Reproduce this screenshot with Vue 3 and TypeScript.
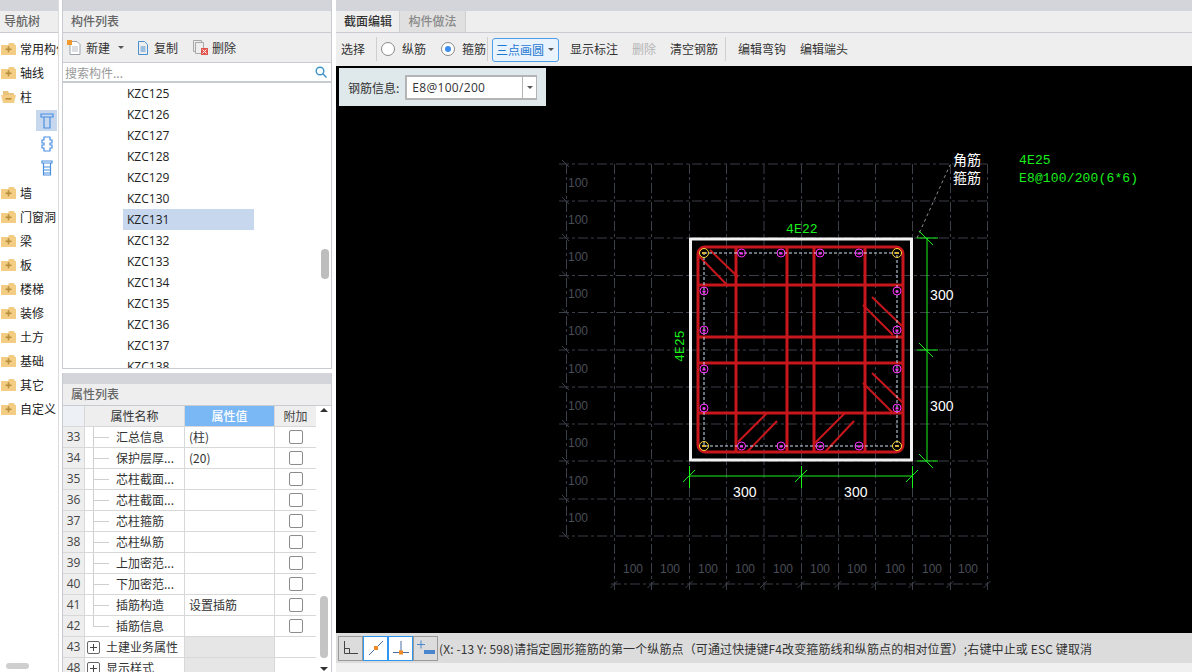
<script setup lang="ts">
interface TreeItem {
  label: string;
  open?: boolean;
}
interface PropRow {
  no: number;
  name: string;
  value?: string;
  group?: boolean;
  last?: boolean;
}

const topTree: TreeItem[] = [
  { label: '常用构件类型' },
  { label: '轴线' },
  { label: '柱', open: true },
];
const bottomTree: TreeItem[] = ['墙', '门窗洞', '梁', '板', '楼梯', '装修', '土方', '基础', '其它', '自定义'].map((label) => ({ label }));

const parts = [125, 126, 127, 128, 129, 130, 131, 132, 133, 134, 135, 136, 137, 138].map((n) => 'KZC' + n);

const props: PropRow[] = [
  { no: 33, name: '汇总信息', value: '(柱)' },
  { no: 34, name: '保护层厚...', value: '(20)' },
  { no: 35, name: '芯柱截面...' },
  { no: 36, name: '芯柱截面...' },
  { no: 37, name: '芯柱箍筋' },
  { no: 38, name: '芯柱纵筋' },
  { no: 39, name: '上加密范...' },
  { no: 40, name: '下加密范...' },
  { no: 41, name: '插筋构造', value: '设置插筋' },
  { no: 42, name: '插筋信息', last: true },
  { no: 43, name: '土建业务属性', group: true },
  { no: 48, name: '显示样式', group: true },
];

// drawing coordinates are page pixels, the svg viewBox starts at the canvas corner
const gridX = [614.5, 651.5, 689.5, 726.5, 764, 801.5, 838.5, 875.5, 912.5, 950.5, 987.5];
const gridY = [164, 201, 238, 275.5, 312.5, 350, 387, 424, 461, 499, 536];
const leftLabels = [183, 220, 257, 294, 331, 369, 406, 443, 481, 518];
const bottomLabels = [633, 670, 708, 745, 783, 820, 857, 895, 932, 968];

const rebarV = [736, 787, 814, 865];
const rebarH = [285, 337, 363, 413];
const hooks = [
  [698, 255, 728, 286],
  [710, 250, 738, 277],
  [863, 305, 893, 335],
  [872, 297, 902, 326],
  [863, 383, 893, 413],
  [872, 373, 902, 402],
  [738, 442, 767, 413],
  [747, 452, 777, 421],
  [815, 443, 845, 413],
  [825, 452, 854, 421],
];
const barsTop = [741.5, 781, 820, 859];
const barsSide = [291, 330, 369, 408];
const corners = [
  [704, 253],
  [897, 253],
  [704, 446],
  [897, 446],
];
const sideBars = [
  ...barsTop.flatMap((x) => [[x, 253], [x, 446]]),
  ...barsSide.flatMap((y) => [[704, y], [897, y]]),
];
</script>

<template>
  <div class="app">
    <aside class="nav">
      <div class="strip"></div>
      <div class="head">导航树</div>
      <div class="tree">
        <div v-for="item in topTree" :key="item.label" class="tree-row">
          <svg v-if="item.open" class="folder" width="15" height="13" viewBox="0 0 15 13">
            <path d="M2 3V1h5l1 2h5v2H2z" fill="#e8c47c" />
            <path d="M0 5h15l-2 8H2z" fill="#f2cd83" />
            <rect x="4.500" y="8" width="6" height="1.600" fill="#b98f3c" />
          </svg>
          <svg v-else class="folder" width="15" height="13" viewBox="0 0 15 13">
            <path d="M0 3h7l1-2h5l1 2h1v10H0z" fill="#f2cd83" />
            <rect x="4.500" y="6.500" width="6" height="1.600" fill="#b98f3c" />
            <rect x="6.700" y="4.300" width="1.600" height="6" fill="#b98f3c" />
          </svg>
          <span>{{ item.label }}</span>
        </div>
        <div class="tree-child selected">
          <svg width="14" height="16" viewBox="0 0 14 16" fill="none" stroke="#4a90e2" stroke-width="1.2">
            <path d="M1 1h12v3H1zM4 4h6v11H4z" />
          </svg>
        </div>
        <div class="tree-child">
          <svg width="14" height="16" viewBox="0 0 14 16" fill="none" stroke="#4a90e2" stroke-width="1.2">
            <path d="M4 1h6v3h2v3h-2v2h2v3h-2v3H4v-3H2V9h2V7H2V4h2z" />
          </svg>
        </div>
        <div class="tree-child">
          <svg width="14" height="16" viewBox="0 0 14 16" fill="none" stroke="#4a90e2" stroke-width="1.2">
            <path d="M2 1h10v2H2zM3.500 3h7v12h-7zM3.500 7h7M3.500 10h7M3.500 13h7" />
          </svg>
        </div>
        <div v-for="item in bottomTree" :key="item.label" class="tree-row">
          <svg class="folder" width="15" height="13" viewBox="0 0 15 13">
            <path d="M0 3h7l1-2h5l1 2h1v10H0z" fill="#f2cd83" />
            <rect x="4.500" y="6.500" width="6" height="1.600" fill="#b98f3c" />
            <rect x="6.700" y="4.300" width="1.600" height="6" fill="#b98f3c" />
          </svg>
          <span>{{ item.label }}</span>
        </div>
      </div>
      <div class="nav-thumb"></div>
    </aside>

    <section class="middle">
      <div class="part-panel">
        <div class="strip"></div>
        <div class="head">构件列表</div>
        <div class="part-tools">
          <span class="tool first">
            <svg width="15" height="15" viewBox="0 0 15 15" fill="none">
              <path d="M3 1.500h7l3 3v10H3z" fill="#fff" stroke="#9aa3ad" />
              <path d="M5 7h6M5 9h6M5 11h6" stroke="#b6bcc4" />
              <rect x="0" y="0" width="5" height="5" fill="#f29a2e" />
            </svg>
            <span>新建</span>
            <i class="caret"></i>
          </span>
          <span class="tool copy">
            <svg width="12" height="14" viewBox="0 0 12 14" fill="none" stroke="#4a90d0">
              <path d="M1.500.500h6l3 3v10h-9zM3.500 6h5M3.500 8h5M3.500 10h5" />
            </svg>
            <span>复制</span>
          </span>
          <span class="tool del">
            <svg width="15" height="15" viewBox="0 0 15 15" fill="none">
              <path d="M.500.500h8v11h-8z" stroke="#a8a8a8" />
              <path d="M2.500 2.500h8v11h-8z" stroke="#a8a8a8" fill="#eee" />
              <rect x="8" y="8" width="7" height="7" fill="#e0564f" />
              <path d="M9.500 9.500l4 4M13.500 9.500l-4 4" stroke="#fff" />
            </svg>
            <span>删除</span>
          </span>
        </div>
        <div class="search">
          <span>搜索构件...</span>
          <svg width="12" height="12" viewBox="0 0 12 12" fill="none" stroke="#3c92c8" stroke-width="1.400">
            <circle cx="5" cy="5" r="3.800" />
            <path d="M8 8l3.500 3.500" />
          </svg>
        </div>
        <div class="part-list">
          <div v-for="p in parts" :key="p" class="part" :class="{ active: p === 'KZC131' }">{{ p }}</div>
          <div class="list-thumb"></div>
        </div>
      </div>

      <div class="prop-panel">
        <div class="strip"></div>
        <div class="head">属性列表</div>
        <div class="prop-body">
          <div class="prop-table">
            <div class="prop-row header">
              <div class="c-no"></div>
              <div class="c-name">属性名称</div>
              <div class="c-value">属性值</div>
              <div class="c-extra">附加</div>
            </div>
            <div v-for="r in props" :key="r.no" class="prop-row">
              <div class="c-no">{{ r.no }}</div>
              <div class="c-name" :class="{ branch: !r.group, last: r.last, group: r.group }">
                <i v-if="r.group" class="plus"></i>
                <span>{{ r.name }}</span>
              </div>
              <div class="c-value" :class="{ muted: r.group }">{{ r.value }}</div>
              <div class="c-extra"><i v-if="!r.group" class="check"></i></div>
            </div>
          </div>
          <div class="prop-scroll">
            <i class="arrow up"></i>
            <i class="arrow down"></i>
            <div class="prop-thumb"></div>
          </div>
        </div>
      </div>
    </section>

    <main class="editor">
      <div class="strip"></div>
      <div class="tabs">
        <div class="tab active">截面编辑</div>
        <div class="tab">构件做法</div>
      </div>
      <div class="tools">
        <span class="t-select">选择</span>
        <i class="sep"></i>
        <span class="radio"></span>
        <span class="r-label">纵筋</span>
        <span class="radio on"></span>
        <span class="r-label end">箍筋</span>
        <i class="sep tight"></i>
        <span class="combo">三点画圆<i class="caret"></i></span>
        <span class="btn">显示标注</span>
        <span class="btn disabled">删除</span>
        <span class="btn">清空钢筋</span>
        <i class="sep wide"></i>
        <span class="btn first">编辑弯钩</span>
        <span class="btn">编辑端头</span>
      </div>

      <div class="canvas">
        <div class="info">
          <span>钢筋信息:</span>
          <div class="info-select">
            <span class="info-text">E8@100/200</span>
            <span class="info-arrow"><i class="caret"></i></span>
          </div>
        </div>
        <svg class="drawing" viewBox="336 66 856 567" width="856" height="567">
          <g stroke="#3a3f4a" stroke-width="1" stroke-dasharray="10 3 3 3" fill="none">
            <path v-for="y in gridY" :key="'h' + y" :d="`M559 ${y}H989`" />
            <path v-for="x in gridX" :key="'v' + x" :d="`M${x} 164V590`" />
            <path d="M566.500 164V536M611 584H990" />
          </g>
          <g stroke="#3a3f4a" fill="none">
            <path v-for="y in gridY" :key="'t' + y" :d="`M562 ${y - 4}l7 7`" />
            <path v-for="x in gridX" :key="'b' + x" :d="`M${x - 4} 588l7 -7`" />
          </g>
          <g class="dim-text">
            <text v-for="y in leftLabels" :key="'l' + y" x="568" :y="y + 4">100</text>
            <text v-for="x in bottomLabels" :key="'m' + x" :x="x" y="573" text-anchor="middle">100</text>
          </g>

          <path d="M917 238L950 165" stroke="#8a8a8a" stroke-dasharray="3 3" fill="none" />
          <rect x="690.500" y="239" width="221" height="221" fill="none" stroke="#f2f2f2" stroke-width="3" />

          <g stroke="#c8161d" stroke-width="3" fill="none">
            <rect x="698" y="247" width="205" height="205" rx="7" />
            <path v-for="x in rebarV" :key="'rv' + x" :d="`M${x} 247V452`" />
            <path v-for="y in rebarH" :key="'rh' + y" :d="`M698 ${y}H903`" />
          </g>
          <g stroke="#c8161d" stroke-width="2" fill="none">
            <path v-for="h in hooks" :key="h.join()" :d="`M${h[0]} ${h[1]}L${h[2]} ${h[3]}`" />
          </g>
          <rect x="704" y="253" width="193" height="193" fill="none" stroke="#cfe2f5" stroke-dasharray="3 2" />

          <g fill="none" stroke="#ff30ff">
            <circle v-for="b in sideBars" :key="b.join()" :cx="b[0]" :cy="b[1]" r="4" />
          </g>
          <g fill="#ff30ff">
            <rect v-for="b in sideBars" :key="'f' + b.join()" :x="b[0] - 1.500" :y="b[1] - 0.500" width="3" height="2" />
          </g>
          <g fill="none" stroke="#ffdc3c">
            <circle v-for="c in corners" :key="c.join()" :cx="c[0]" :cy="c[1]" r="4.500" />
          </g>
          <g fill="#d9b23c">
            <rect v-for="c in corners" :key="'y' + c.join()" :x="c[0] - 2" :y="c[1] - 1" width="4" height="2" />
          </g>

          <g stroke="#19f01c" fill="none">
            <path d="M689.500 476H912.500M689.500 466V488M801.500 466V488M912.500 466V488" />
            <path d="M683 482l12 -12M795 482l12 -12M906 482l12 -12" />
            <path d="M927 238V461M917 238H938M917 350H938M917 461H938" />
            <path d="M919 231l14 14M919 343l14 14M919 454l14 14" />
          </g>

          <g class="cad green">
            <text x="786" y="233">4E22</text>
            <text x="1019" y="164">4E25</text>
            <text x="1019" y="182">E8@100/200(6*6)</text>
            <text transform="translate(684 362) rotate(-90)">4E25</text>
          </g>
          <g class="cad white">
            <text x="733" y="497">300</text>
            <text x="844" y="497">300</text>
            <text x="930" y="300">300</text>
            <text x="930" y="411">300</text>
          </g>
          <g class="cad-cn">
            <text x="953" y="165">角筋</text>
            <text x="953" y="183">箍筋</text>
          </g>
        </svg>
      </div>

      <div class="status">
        <span class="s-btn">
          <svg width="16" height="16" viewBox="0 0 16 16" fill="none" stroke="#444">
            <path d="M1.500 1v12.500H15M1.500 8.500h5v5" />
          </svg>
        </span>
        <span class="s-btn on">
          <svg width="18" height="18" viewBox="0 0 18 18" fill="none">
            <path d="M2 16L16 2" stroke="#4a6fa5" />
            <rect x="7" y="7" width="4" height="4" fill="#f08a24" />
          </svg>
        </span>
        <span class="s-btn on">
          <svg width="18" height="18" viewBox="0 0 18 18" fill="none">
            <path d="M1 13.500h16M9 2v13" stroke="#4a6fa5" />
            <rect x="7" y="11.500" width="4" height="4" fill="#f08a24" />
          </svg>
        </span>
        <span class="s-btn">
          <svg width="20" height="18" viewBox="0 0 20 18" fill="none">
            <path d="M1 5.500h8M5 1.500v8" stroke="#4a86d0" />
            <rect x="8" y="11" width="11" height="4" fill="#4a86d0" />
          </svg>
        </span>
        <span class="s-text">(X: -13 Y: 598)请指定圆形箍筋的第一个纵筋点（可通过快捷键F4改变箍筋线和纵筋点的相对位置）;右键中止或 ESC 键取消</span>
      </div>
      <div class="foot"></div>
    </main>
  </div>
</template>

<style>
html,
body {
  margin: 0;
  background: #fff;
  overflow: hidden;
}
</style>

<style scoped>
.app {
  display: flex;
  width: 1192px;
  height: 672px;
  overflow: hidden;
  background: #fff;
  color: #333;
  font-family: "Noto Sans CJK SC", "Noto Sans", sans-serif;
  font-size: 12px;
}
.strip {
  height: 11px;
  background: #d4d5da;
  flex: none;
}
.head {
  height: 21px;
  line-height: 20px;
  padding-left: 8px;
  background: #eeeeee;
  border-bottom: 1px solid #c8ccd0;
  color: #666;
  font-weight: 500;
  flex: none;
}
.nav {
  position: relative;
  width: 58px;
  margin-right: 3px;
  border-right: 1px solid #dcdcdc;
  overflow: hidden;
  flex: none;
}
.nav .head {
  padding-left: 4px;
}
.tree {
  padding-top: 3px;
}
.tree-row {
  display: flex;
  align-items: center;
  height: 24px;
  white-space: nowrap;
  color: #222;
}
.folder {
  margin: 0 4px 0 1px;
  flex: none;
}
.tree-child {
  display: flex;
  align-items: center;
  justify-content: center;
  width: 21px;
  height: 24px;
  margin-left: 36px;
}
.tree-child.selected {
  height: 21px;
  margin-top: 2px;
  margin-bottom: 1px;
  background: #c6d7ee;
}
.nav-thumb {
  position: absolute;
  left: 6px;
  bottom: 3px;
  width: 23px;
  height: 6px;
  border-radius: 3px;
  background: #cfcfcf;
}
.middle {
  width: 270px;
  margin-right: 4px;
  flex: none;
  display: flex;
  flex-direction: column;
}
.part-panel {
  height: 369px;
  display: flex;
  flex-direction: column;
  border-right: 1px solid #c8ccd0;
  border-left: 1px solid #c8ccd0;
  border-bottom: 1px solid #c8ccd0;
  box-sizing: border-box;
}
.part-tools {
  display: flex;
  align-items: center;
  height: 29px;
  background: #eeeeee;
  border-bottom: 1px solid #c8ccd0;
  flex: none;
}
.tool {
  display: flex;
  align-items: center;
  gap: 5px;
}
.tool.first {
  gap: 4px;
  margin-left: 4px;
}
.tool.first .caret {
  margin-left: 4px;
}
.tool.copy {
  margin-left: 13px;
}
.tool.del {
  gap: 4px;
  margin-left: 15px;
}
.caret {
  display: inline-block;
  width: 0;
  height: 0;
  border-left: 3px solid transparent;
  border-right: 3px solid transparent;
  border-top: 3px solid #555;
}
.search {
  display: flex;
  align-items: center;
  justify-content: space-between;
  height: 18px;
  padding: 0 4px 0 2px;
  color: #999;
  border-bottom: 2px solid #c8ccd0;
  flex: none;
}
.part-list {
  position: relative;
  flex: 1;
  overflow: hidden;
  padding-left: 60px;
}
.part {
  width: 131px;
  height: 21px;
  box-sizing: border-box;
  line-height: 21px;
  padding-left: 4px;
  color: #222;
  font-family: "Open Sans", sans-serif;
}
.part.active {
  background: #c6d7ee;
}
.list-thumb {
  position: absolute;
  top: 166px;
  right: 2px;
  width: 8px;
  height: 30px;
  border-radius: 4px;
  background: #bdbdbd;
}
.prop-panel {
  margin-top: 4px;
  flex: 1;
  min-height: 0;
  display: flex;
  flex-direction: column;
  overflow: hidden;
  border-right: 1px solid #c8ccd0;
  border-left: 1px solid #c8ccd0;
  box-sizing: border-box;
}
.prop-body {
  position: relative;
  flex: 1;
  display: flex;
  min-height: 0;
  overflow: hidden;
}
.prop-table {
  width: 253px;
  flex: none;
}
.prop-row {
  display: grid;
  grid-template-columns: 22px 100px 90px 41px;
  height: 21px;
  box-sizing: border-box;
  border-bottom: 1px solid #d8d8d8;
}
.prop-row.header {
  height: 21px;
  color: #444;
  text-align: center;
  line-height: 20px;
}
.prop-row.header .c-no {
  background: #edf0f5;
}
.prop-row.header .c-name,
.prop-row.header .c-extra {
  padding: 0;
  background: #eeeeee;
}
.prop-row.header .c-value {
  background: #7ab8f5;
  color: #fff;
  font-weight: 500;
  padding: 0;
}
.c-no {
  background: #eeeeee;
  text-align: center;
  line-height: 20px;
  color: #444;
  font-family: "Open Sans", sans-serif;
  border-right: 1px solid #d8d8d8;
}
.c-name {
  position: relative;
  line-height: 20px;
  padding-left: 31px;
  white-space: nowrap;
  overflow: hidden;
  color: #333;
  border-right: 1px solid #d8d8d8;
}
.c-name.branch::before {
  content: "";
  position: absolute;
  left: 8px;
  top: -1px;
  bottom: 0;
  border-left: 1px solid #cfcfcf;
}
.c-name.branch::after {
  content: "";
  position: absolute;
  left: 8px;
  top: 10px;
  width: 16px;
  border-top: 1px solid #cfcfcf;
}
.c-name.branch.last::before {
  bottom: 10px;
}
.c-name.group {
  display: flex;
  align-items: center;
  gap: 6px;
  padding-left: 2px;
}
.plus {
  position: relative;
  width: 11px;
  height: 11px;
  border: 1px solid #666;
  border-radius: 2px;
  flex: none;
}
.plus::before,
.plus::after {
  content: "";
  position: absolute;
  background: #444;
}
.plus::before {
  left: 2px;
  top: 5px;
  width: 7px;
  height: 1px;
}
.plus::after {
  left: 5px;
  top: 2px;
  width: 1px;
  height: 7px;
}
.c-value {
  padding-left: 4px;
  line-height: 20px;
  border-right: 1px solid #d8d8d8;
}
.c-value.muted {
  background: #e6e6e6;
}
.c-extra {
  display: flex;
  align-items: center;
  justify-content: center;
}
.check {
  width: 12px;
  height: 12px;
  border: 1px solid #8c8c8c;
  border-radius: 2px;
  background: #fff;
}
.prop-scroll {
  flex: 1;
  position: relative;
}
.arrow {
  position: absolute;
  left: 4px;
  width: 0;
  height: 0;
  border-left: 4px solid transparent;
  border-right: 4px solid transparent;
}
.arrow.up {
  top: 2px;
  border-bottom: 4px solid #333;
}
.arrow.down {
  top: 261px;
  border-top: 4px solid #333;
}
.prop-thumb {
  position: absolute;
  top: 190px;
  left: 4px;
  width: 8px;
  height: 62px;
  border-radius: 4px;
  background: #c4c4c4;
}
.editor {
  flex: 1;
  min-width: 0;
  display: flex;
  flex-direction: column;
}
.tabs {
  display: flex;
  height: 22px;
  padding-left: 1px;
  background: #eeeeee;
  border-bottom: 1px solid #c8ccd0;
  box-sizing: border-box;
  flex: none;
}
.tab {
  width: 65px;
  line-height: 20px;
  text-align: center;
  color: #8a8a8a;
  font-weight: 500;
  background: #e0e0e0;
  border-right: 1px solid #cfcfcf;
}
.tab.active {
  width: 62px;
  color: #333;
  background: #eeeeee;
}
.tools {
  display: flex;
  align-items: center;
  height: 33px;
  padding-left: 5px;
  padding-bottom: 2px;
  box-sizing: border-box;
  background: #eeeeee;
  white-space: nowrap;
  flex: none;
}
.sep {
  width: 1px;
  height: 24px;
  margin: 0 4px 0 11px;
  background: #cfcfcf;
}
.sep.tight {
  margin: 0 4px 0 1px;
}
.sep.wide {
  margin: 0 0 0 7px;
}
.radio {
  width: 12px;
  height: 12px;
  border: 1px solid #8a8a8a;
  border-radius: 50%;
  background: #fff;
  box-sizing: content-box;
  position: relative;
}
.radio.on::after {
  content: "";
  position: absolute;
  left: 3px;
  top: 3px;
  width: 6px;
  height: 6px;
  border-radius: 50%;
  background: #3d8cf0;
}
.r-label {
  margin-left: 7px;
  margin-right: 15px;
}
.r-label.end {
  margin-right: 0;
}
.combo {
  display: flex;
  align-items: center;
  justify-content: space-between;
  width: 67px;
  height: 24px;
  margin-top: 2px;
  padding: 0 4px 0 3px;
  box-sizing: border-box;
  border: 1px solid #4d9de8;
  border-radius: 3px;
  background: #e8f3fd;
  color: #1e78d2;
}
.btn {
  margin-left: 14px;
}
.combo + .btn {
  margin-left: 11px;
}
.btn.first {
  margin-left: 12px;
}
.btn.disabled {
  color: #b5b5b5;
}
.canvas {
  position: relative;
  height: 567px;
  background: #000;
  overflow: hidden;
  flex: none;
}
.drawing {
  display: block;
}
.info {
  position: absolute;
  left: 3px;
  top: 2px;
  z-index: 1;
  width: 207px;
  height: 38px;
  box-sizing: border-box;
  display: flex;
  align-items: center;
  padding-left: 9px;
  gap: 6px;
  background: #dfe8ea;
  color: #333;
}
.info-select {
  display: flex;
  width: 132px;
  height: 25px;
  box-sizing: border-box;
  border: 2px solid #b4b4b4;
  border-right-width: 1px;
  background: #fff;
}
.info-text {
  flex: 1;
  padding-left: 5px;
  line-height: 22px;
  letter-spacing: 0.3px;
  font-family: "Open Sans", sans-serif;
}
.info-arrow {
  width: 13px;
  display: flex;
  align-items: center;
  justify-content: center;
  border-left: 1px solid #b4b4b4;
}
.dim-text text {
  fill: #4a4e57;
  font-family: "Liberation Sans", sans-serif;
  font-size: 12px;
}
.cad text {
  font-family: "Liberation Mono", monospace;
  font-size: 13px;
  letter-spacing: 0.15px;
}
.cad.green text {
  fill: #19f01c;
}
.cad.white text {
  fill: #fff;
  font-family: "Liberation Sans", sans-serif;
  font-size: 14px;
}
.cad-cn text {
  fill: #fff;
  font-family: "Noto Sans CJK SC", sans-serif;
  font-size: 14px;
}
.status {
  display: flex;
  align-items: center;
  height: 30px;
  padding-left: 2px;
  background: #dcdcdc;
  white-space: nowrap;
  overflow: hidden;
  flex: none;
}
.s-btn {
  display: flex;
  align-items: center;
  justify-content: center;
  width: 25px;
  height: 25px;
  box-sizing: border-box;
  border: 1px solid #9a9a9a;
}
.s-btn.on {
  background: #fff;
  border: 1px solid #2f97f0;
}
.s-text {
  margin-left: 1px;
  letter-spacing: 0.12px;
  color: #333;
}
.foot {
  flex: 1;
  background: #f0f0f0;
}
</style>
